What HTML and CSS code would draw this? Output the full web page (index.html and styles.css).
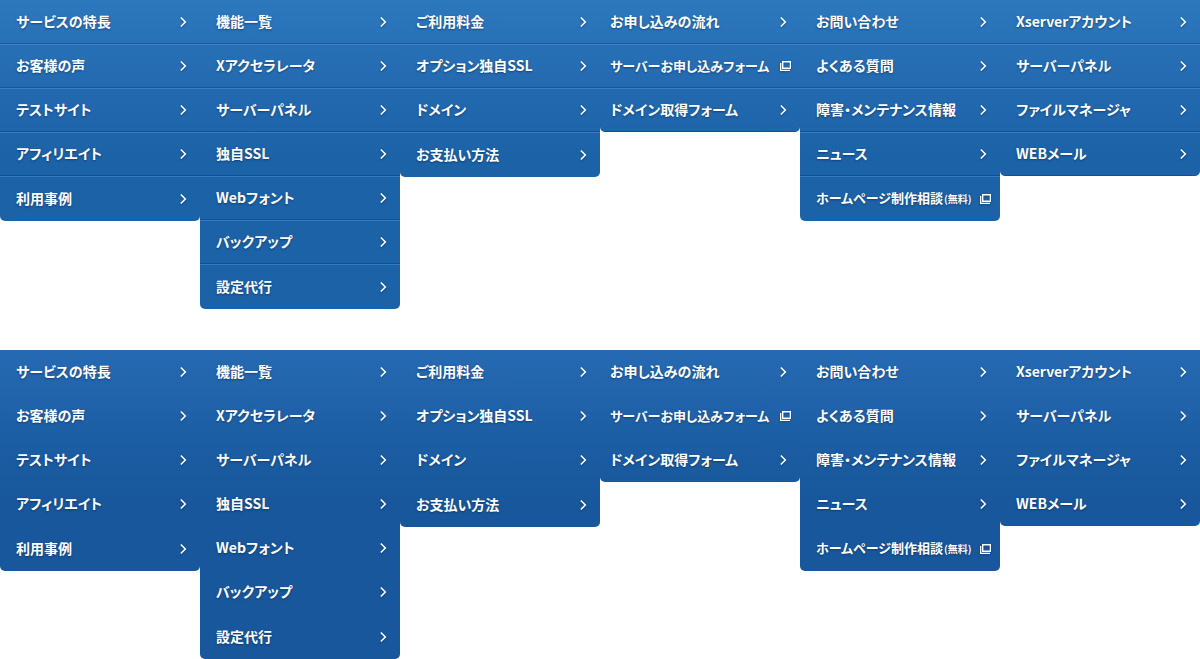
FILE: index.html
```html
<!DOCTYPE html>
<html lang="ja">
<head>
<meta charset="utf-8">
<title>メニュー</title>
<link rel="stylesheet" href="styles.css">
</head>
<body>
<svg class="defs" aria-hidden="true">
  <symbol id="arrow" viewBox="0 0 12 12"><path d="M0.8 1.5 L5.3 6 L0.8 10.5" fill="none" stroke="currentColor" stroke-width="1.6"/></symbol>
  <symbol id="window" viewBox="0 0 12 12"><path fill="currentColor" fill-rule="evenodd" d="M2 1H11V9H2ZM3.4 2.6V7.5H9.7V2.6Z"/><path d="M0 3H1.3V9.8H10V11H0Z" fill="currentColor"/></symbol>
</svg>
<div id="menus"></div>
<script src="menu.js"></script>
</body>
</html>
```
FILE: styles.css
```css
body {
  margin: 0;
  background: #fff;
  font-family: "Noto Sans CJK JP", "Noto Sans", sans-serif;
  font-size: 14px;
  font-weight: 700;
  font-feature-settings: "palt";
}
.defs { display: none; }
.menu {
  display: grid;
  grid-template-columns: repeat(6, 1fr);
  align-items: start;
}
.menu + .menu { margin-top: 41px; }
.column {
  margin: 0;
  padding: 0;
  list-style: none;
  overflow: hidden;
  border-radius: 0 0 5px 5px;
  background: #1b62a7 linear-gradient(#2d78bd 0, #2369af 88px, #1b62a7 160px) no-repeat;
}
.item {
  display: flex;
  align-items: center;
  justify-content: space-between;
  box-sizing: border-box;
  height: 44px;
  padding: 0 8px 0 16px;
  color: #fff;
  text-decoration: none;
  text-shadow: 0 1px 2px rgba(0, 30, 80, 0.5);
  white-space: nowrap;
  border-top: 1px solid rgba(90, 160, 220, 0.4);
  border-bottom: 1px solid rgba(0, 50, 120, 0.35);
}
li:first-child .item { border-top-color: transparent; }
.extended li:last-child .item {
  height: 45px;
  border-bottom-color: transparent;
}
.order .item { padding-left: 10px; }
.label { padding-bottom: 2px; }
.external { font-size: 13px; }
.note {
  margin-left: 1px;
  font-size: 10px;
}
.icon {
  width: 12px;
  height: 12px;
  flex: none;
  filter: drop-shadow(0 1px 1px rgba(0, 30, 80, 0.4));
}
.active .column {
  background: #18579b linear-gradient(#266ab3 0, #1c5ea4 88px, #18579b 150px) no-repeat;
}
.active .item { border-color: transparent; }
.active li:first-child .item { border-color: transparent; }
```
FILE: menu.js
```js
const columns = [
  { items: ["サービスの特長", "お客様の声", "テストサイト", "アフィリエイト", "利用事例"], extended: true },
  { items: ["機能一覧", "Xアクセラレータ", "サーバーパネル", "独自SSL", "Webフォント", "バックアップ", "設定代行"], extended: true },
  { items: ["ご利用料金", "オプション独自SSL", "ドメイン", "お支払い方法"], extended: true },
  { items: ["お申し込みの流れ", { text: "サーバーお申し込みフォーム", external: true }, "ドメイン取得フォーム"], order: true },
  { items: ["お問い合わせ", "よくある質問", "障害・メンテナンス情報", "ニュース", { text: "ホームページ制作相談", note: "(無料)", external: true }], extended: true },
  { items: ["Xserverアカウント", "サーバーパネル", "ファイルマネージャ", "WEBメール"] }
];

function renderItem(entry) {
  const item = typeof entry === "string" ? { text: entry } : entry;
  const note = item.note ? `<span class="note">${item.note}</span>` : "";
  const icon = item.external ? "window" : "arrow";
  const classes = item.external ? "item external" : "item";
  return `<li><a class="${classes}" href="#"><span class="label">${item.text}${note}</span><svg class="icon" aria-hidden="true"><use href="#${icon}"/></svg></a></li>`;
}

function renderMenu(state) {
  const lists = columns.map(c => {
    const classes = ["column", c.extended && "extended", c.order && "order"].filter(Boolean).join(" ");
    return `<ul class="${classes}">${c.items.map(renderItem).join("")}</ul>`;
  });
  return `<nav class="menu ${state}">${lists.join("")}</nav>`;
}

document.getElementById("menus").innerHTML = renderMenu("normal") + renderMenu("active");
```
